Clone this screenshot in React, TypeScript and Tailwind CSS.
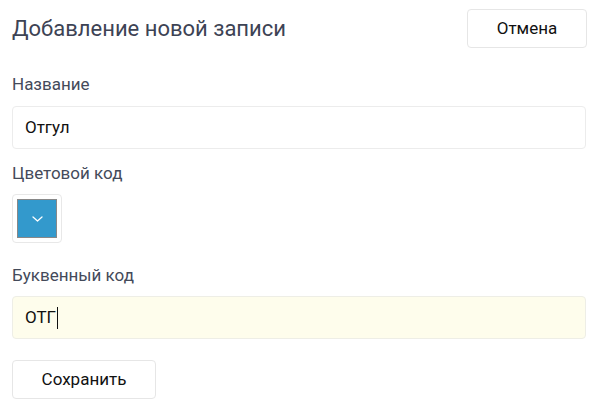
export default function App() {
  return (
    <div className="w-[596px] h-[420px] bg-white pl-3 pr-[9px] pt-[9px] font-['Roboto',sans-serif]">
      {/* Header */}
      <div className="flex items-center justify-between">
        <h1 className="text-[22px] text-[#3d4354] leading-none">Добавление новой записи</h1>
        <button className="w-[120px] h-[39px] border border-[#e6e6e6] rounded-[4px] text-[17px] text-[#111]">
          Отмена
        </button>
      </div>

      {/* Name */}
      <label className="block mt-[28px] text-[17px] text-[#444a5a] leading-none">Название</label>
      <div className="mt-[13px] mr-[1px] h-[43px] border border-[#ececec] rounded-[4px] flex items-center px-3 text-[17px] text-[#111]">
        Отгул
      </div>

      {/* Color */}
      <label className="block mt-[16px] text-[17px] text-[#444a5a] leading-none">Цветовой код</label>
      <div className="mt-[12px] w-[50px] h-[49px] border border-[#e8e8e8] rounded-[4px] p-[4px]">
        <div className="w-full h-full bg-[#3399cc] border border-[#888] flex items-center justify-center">
          <svg width="13" height="8" viewBox="0 0 13 8" fill="none">
            <path d="M2 2l4.5 4 4.5-4" stroke="white" strokeWidth="1.3" strokeLinecap="round" strokeLinejoin="round" />
          </svg>
        </div>
      </div>

      {/* Letter code */}
      <label className="block mt-[24px] text-[17px] text-[#444a5a] leading-none">Буквенный код</label>
      <div className="mt-[12px] mr-[1px] h-[43px] border border-[#eeeee6] bg-[#fefdec] rounded-[4px] flex items-center px-3 text-[17px] text-[#111]">
        <span>ОТГ</span>
        <span className="w-px h-[22px] bg-[#111] ml-[1px]"></span>
      </div>

      <button className="mt-[21px] w-[144px] h-[39px] border border-[#e6e6e6] rounded-[4px] text-[17px] text-[#111]">
        Сохранить
      </button>
    </div>
  );
}
